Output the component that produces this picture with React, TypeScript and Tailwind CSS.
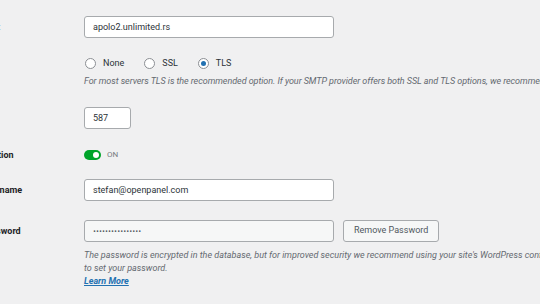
import React from 'react';

function Label({ children }: { children: React.ReactNode }) {
  return (
    <div className="w-[130px] shrink-0 whitespace-nowrap text-[9px] font-bold leading-[12px] text-[#1d2327]">
      {children}
    </div>
  );
}

function TextField({ value, width = 'w-[250px]', muted = false }: { value: string; width?: string; muted?: boolean }) {
  return (
    <input
      readOnly
      value={value}
      className={`${width} h-[22px] rounded-[3px] border border-[#a7aaad] px-2 outline-none ${
        muted ? 'bg-[#f6f7f7] text-[10px] font-bold text-[#50575e]' : 'bg-white text-[9px] text-[#2c3338]'
      }`}
    />
  );
}

function Radio({ label, checked = false }: { label: string; checked?: boolean }) {
  return (
    <label className="flex items-center gap-[7px]">
      <span className="flex h-[11px] w-[11px] items-center justify-center rounded-full border border-[#8c8f94] bg-white">
        {checked && <span className="h-[5px] w-[5px] rounded-full bg-[#2271b1]" />}
      </span>
      <span className="text-[9px] leading-[12px] text-[#2c3338]">{label}</span>
    </label>
  );
}

export default function App() {
  return (
    <div className="h-[304px] w-[540px] overflow-hidden bg-[#f0f0f1] font-['Roboto','Liberation_Sans',sans-serif]">
      <div className="-ml-[46px] flex w-[800px] flex-col">
        {/* SMTP Host */}
        <div className="mt-[16px] flex items-center">
          <Label>SMTP Host</Label>
          <TextField value="apolo2.unlimited.rs" />
        </div>

        {/* Encryption */}
        <div className="mt-[19px] flex">
          <Label>Encryption</Label>
          <div className="flex flex-col">
            <div className="flex h-[12px] items-center gap-[20px] pl-[1px]">
              <Radio label="None" />
              <Radio label="SSL" />
              <Radio label="TLS" checked />
            </div>
            <p className="mt-[6px] whitespace-nowrap text-[9px] italic leading-[13px] tracking-[-0.05px] text-[#646970]">
              For most servers TLS is the recommended option. If your SMTP provider offers both SSL and TLS options, we recommend using TLS.
            </p>
          </div>
        </div>

        {/* SMTP Port */}
        <div className="mt-[19px] flex items-center">
          <Label>SMTP Port</Label>
          <TextField value="587" width="w-[47px]" />
        </div>

        {/* Authentication */}
        <div className="mt-[20px] flex h-[12px] items-center">
          <Label>Authentication</Label>
          <div className="flex items-center gap-[6px]">
            <span className="flex h-[10px] w-[17px] items-center justify-end rounded-full bg-[#00a32a] pr-[2px]">
              <span className="h-[6px] w-[6px] rounded-full bg-white" />
            </span>
            <span className="text-[8px] leading-[12px] text-[#787c82]">ON</span>
          </div>
        </div>

        {/* SMTP Username */}
        <div className="mt-[18px] flex items-center">
          <Label>SMTP Username</Label>
          <TextField value="stefan@openpanel.com" />
        </div>

        {/* SMTP Password */}
        <div className="mt-[19px] flex">
          <Label>
            <div className="flex h-[22px] items-center">SMTP Password</div>
          </Label>
          <div className="flex flex-col">
            <div className="flex items-center gap-[9px]">
              <TextField value="················" muted />
              <button className="h-[22px] rounded-[3px] border border-[#a7aaad] bg-[#f6f7f7] px-[10px] text-[9px] text-[#50575e]">
                Remove Password
              </button>
            </div>
            <p className="mt-[7px] whitespace-nowrap text-[9px] italic leading-[13px] text-[#646970]">
              The password is encrypted in the database, but for improved security we recommend using your site's WordPress configuration file
              <br />
              to set your password.
              <br />
              <a href="#" className="font-bold text-[#2271b1] underline">
                Learn More
              </a>
            </p>
          </div>
        </div>
      </div>
    </div>
  );
}
